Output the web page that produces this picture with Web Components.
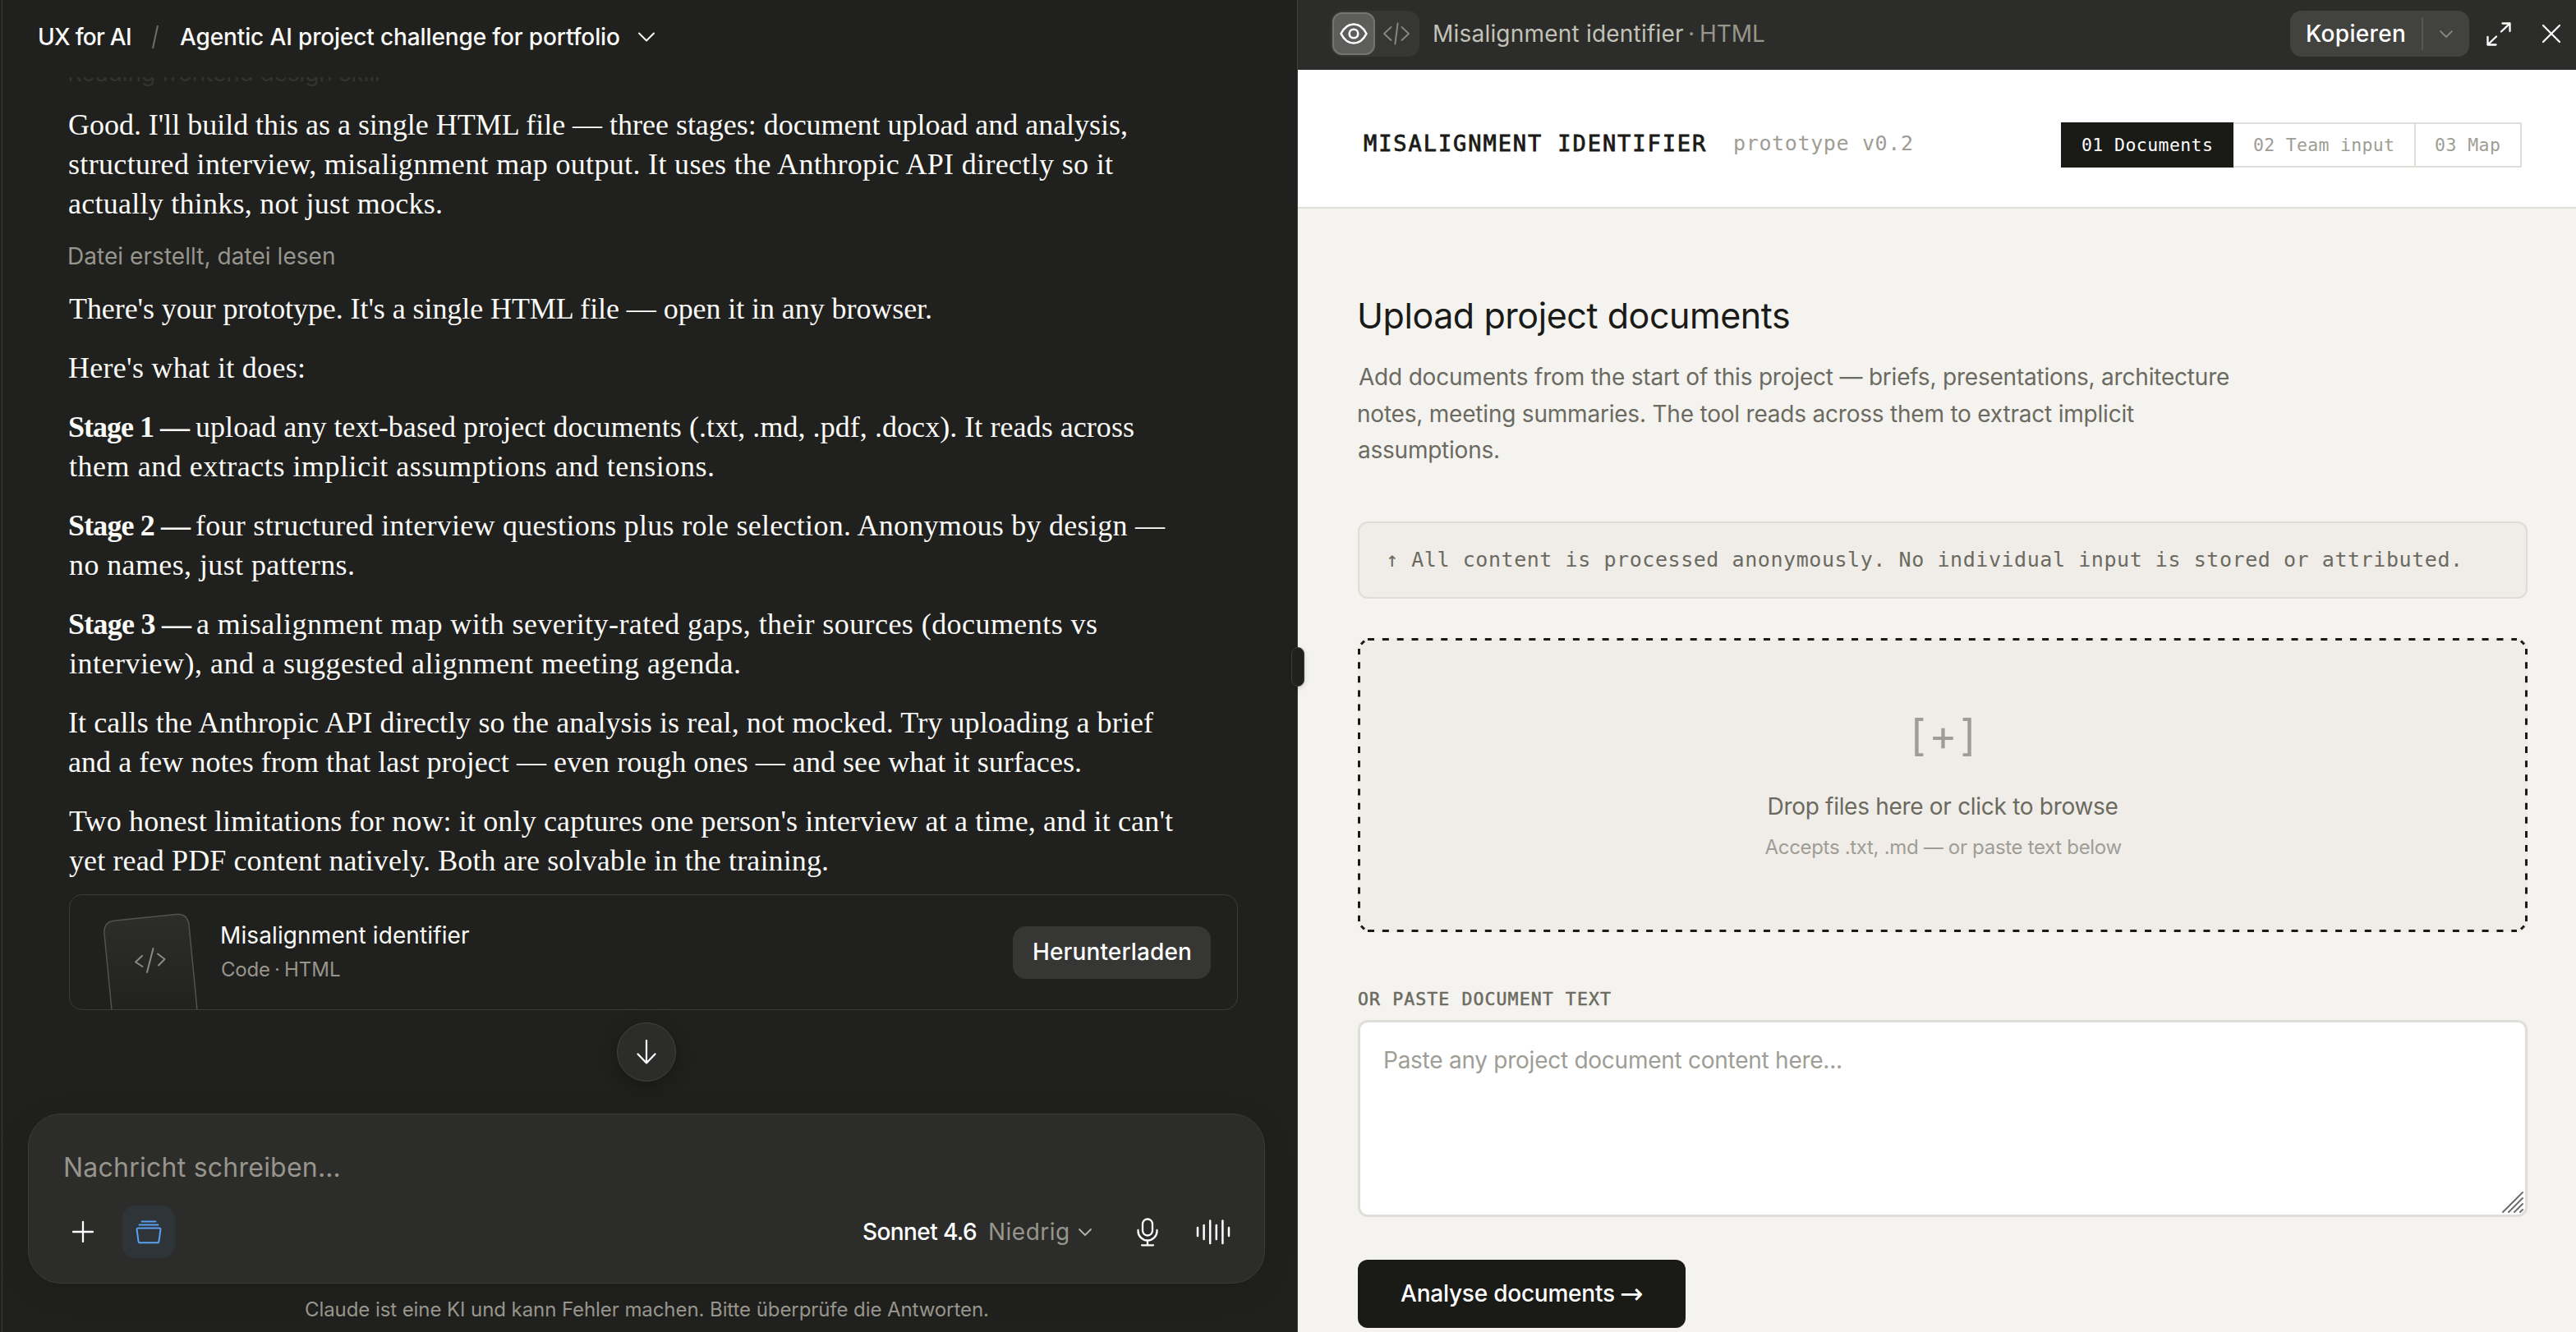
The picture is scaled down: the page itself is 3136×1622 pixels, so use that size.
<!DOCTYPE html>
<html lang="de">
<head>
<meta charset="utf-8">
<title>Misalignment identifier</title>
<style>
html,body{margin:0;height:100%;background:#20201e}
body{font-family:Inter,"Liberation Sans",sans-serif;font-size:28px;overflow:hidden}
</style>
</head>
<body>
<app-shell></app-shell>
<script>
const def=(name,html,after)=>customElements.define(name,class extends HTMLElement{
  constructor(){super();this.attachShadow({mode:'open'}).innerHTML=html}
  connectedCallback(){if(after)after(this)}
});

const ICONS={
  chevron:[20,12,'<path d="M1 1.5 10 10.5 19 1.5"/>'],
  chevronS:[16,9,'<path d="M1 1 8 8 15 1"/>'],
  eye:[34,26,'<path d="M1.5 13C5 6 10.500 1.500 17 1.500S29 6 32.500 13C29 20 23.500 24.500 17 24.500S5 20 1.500 13Z"/><circle cx="17" cy="13" r="5.300"/>'],
  code:[34,28,'<path d="M10.500 6 2 14l8.500 8M18.600 1.500 15.400 26.500M23.500 6 32 14l-8.500 8"/>'],
  expand:[30,29,'<path d="M18 11.500 28.500 1.500M19.500 1.500h9v9.500M12 17.500 1.500 27.500M1.500 18v9.500h10"/>'],
  close:[22,22,'<path d="M1 1 21 21M21 1 1 21"/>'],
  plus:[26,26,'<path d="M13 1v24M1 13h24"/>'],
  down:[24,30,'<path d="M12 1v27.500M1.500 17.500 12 28.500l10.500-11"/>'],
  stack:[32,28,'<path d="M7.500 1.500h17M4.500 5.500h23M3.200 9.500h25.600q1.800 0 1.600 1.800l-1.900 14q-.3 2-2 2H5.500q-1.700 0-2-2l-1.900-14q-.2-1.800 1.600-1.800Z"/>'],
  mic:[26,35,'<rect x="7" y="1.500" width="12" height="20" rx="6"/><path d="M1.500 15v1a11.500 11.500 0 0 0 23 0v-1M13 27.500v6M6 33.300h14"/>'],
  wave:[42,30,'<path d="M2 10v10M9.600 7v17M17.200 1.500v27.500M24.800 7v17M32.400 1.500v27.500M40 10v10"/>'],
  grip:[26,26,'<path d="M1 25 25 1M8 25 25 8M15 25 25 15M22 25 25 22"/>']
};
def('ui-icon','<style>:host{display:block;flex:none;line-height:0}svg{display:block;fill:none;stroke:currentColor;stroke-linecap:round;stroke-linejoin:round;overflow:visible}</style><div></div>',el=>{
  const [w,h,p]=ICONS[el.getAttribute('name')];
  el.shadowRoot.querySelector('div').innerHTML=`<svg width="${w}" height="${h}" viewBox="0 0 ${w} ${h}" stroke-width="${el.getAttribute('sw')||2}">${p}</svg>`;
});

/* artifact card */
def('artifact-card',`<style>
:host{display:flex;box-sizing:border-box;height:141px;border:1.5px solid #3b3b39;border-radius:16px;overflow:hidden;align-items:center;padding:0 32px 0 41px}
.thumb{flex:none;align-self:stretch;width:118px;display:block;margin-left:-1px}
.meta{margin:0 auto 0 27px;display:flex;flex-direction:column}
.t{line-height:40px;color:#fafaf7}
.s{line-height:40px;font-size:24px;color:#97958c;display:flex;gap:9px;margin-top:2px}
.s fit-text+fit-text{margin-left:-2px}
.s fit-text+fit-text+fit-text{margin-left:1px}
.btn{height:64px;width:241px;box-sizing:border-box;padding-left:26px;border-radius:16px;background:#363634;color:#fff;line-height:63px;font-weight:500}
</style>
<svg class="thumb" width="118" height="139" viewBox="125 1090 118 139">
<defs><linearGradient id="g" x1="0" y1="0" x2="0" y2="1"><stop offset="0" stop-color="#2d2d2b"/><stop offset="1" stop-color="#20201e"/></linearGradient></defs>
<path d="M137 1240 127 1137Q126 1122 140 1121L214 1113.500Q228 1112 230 1126L241 1240Z" fill="url(#g)" stroke="#52524f" stroke-width="1.500"/>
<path d="M173 1164 165 1171.500 173.500 1177M186.500 1155 179 1184M192 1161.500 200.500 1168 193 1175.500" fill="none" stroke="#8b8a84" stroke-width="2" stroke-linecap="round" stroke-linejoin="round"/></svg>
<div class="meta"><div class="t"><fit-text w="301">Misalignment identifier</fit-text></div>
<div class="s"><fit-text w="58">Code</fit-text><fit-text w="3">·</fit-text><fit-text w="66">HTML</fit-text></div></div>
<div class="btn"><fit-text w="190">Herunterladen</fit-text></div>`);

def('message-composer',`<style>
:host{display:block;box-sizing:border-box;height:207px;background:#2c2c2a;border:1.5px solid #3b3b39;border-radius:40px;padding:45px 41px 0 34px;box-shadow:0 8px 40px rgba(0,0,0,.12)}
.ph{font-size:32px;line-height:40px;color:#97958c;padding-left:10px}
.row{display:flex;align-items:center;height:64px;margin-top:26px}
.sq{width:64px;height:64px;display:flex;align-items:center;justify-content:center;color:#fff}
.blue{margin-left:16px;border-radius:16px;background:#2f3438;color:#5a9ff0}
.model{margin-left:auto;color:#fff;font-weight:500}
.lvl{color:#97958c;margin:0 13px 0 16px}
</style>
<div class="ph"><fit-text w="334">Nachricht schreiben…</fit-text></div>
<div class="row"><div class="sq"><ui-icon name="plus" sw="2.300"></ui-icon></div>
<div class="sq blue"><ui-icon name="stack" sw="2"></ui-icon></div>
<fit-text class="model" w="138">Sonnet 4.6</fit-text><fit-text class="lvl" w="95">Niedrig</fit-text>
<ui-icon name="chevronS" sw="1.800" style="color:#b5b4ab"></ui-icon>
<ui-icon name="mic" sw="2.300" style="color:#fff;margin-left:55px"></ui-icon>
<ui-icon name="wave" sw="2.500" style="color:#fff;margin-left:46px"></ui-icon></div>`);

/* paragraph of the reply */
def('chat-par',`<style>:host{display:flex;flex-direction:column;align-items:flex-start;margin-bottom:24px;font:36px/48px "Liberation Serif",serif;color:#fafaf7}</style><slot></slot>`);

def('chat-pane',`<style>
:host{display:flex;flex-direction:column;box-sizing:border-box;width:1580px;height:1622px;flex:none;background:#20201e;border-right:1px solid #3e3e3c}
.in{flex:1;margin-left:2px;border-left:1px solid #3b3b39;display:flex;flex-direction:column}
header{display:flex;align-items:center;height:90px;padding:0 0 4px 45px;color:#fafaf7;flex:none;font-weight:500}
header .sl{width:8px;height:28px;margin:0 26px}
header ui-icon{margin-left:23px}
.scroll{overflow:hidden;height:1262px;flex:none;box-sizing:border-box;padding-left:81px;padding-right:72px}
.ghost{margin-top:-25px;height:40px;line-height:40px;color:#333331;margin-bottom:19px}
.st{height:80px;line-height:80px;margin-top:-24px;color:#97958c}
.ln{display:flex}
.ln b{display:block;font-weight:700;margin-right:6px}
artifact-card{margin-top:-7px}
.jump{width:72px;height:72px;box-sizing:border-box;border-radius:50%;border:1.500px solid #42423f;background:#2c2c2a;display:flex;align-items:center;justify-content:center;margin:15px 0 0 667px;color:#fff;box-shadow:0 6px 24px rgba(0,0,0,.3)}
message-composer{margin:0 39px 0 31px}
.foot{font-size:24px;line-height:40px;color:#97958c;margin:12px 0 0 369px}
</style>
<div class="in">
<header><fit-text w="111">UX for AI</fit-text><svg class="sl" viewBox="0 0 8 28"><path d="M7 0 1 28" stroke="#6f6e68" stroke-width="2"/></svg><fit-text w="535">Agentic AI project challenge for portfolio</fit-text><ui-icon name="chevron" sw="2"></ui-icon></header>
<div class="scroll">
<div class="ghost"><fit-text w="377">Reading frontend design skill</fit-text></div>
<chat-par><fit-text w="1287">Good. I'll build this as a single HTML file — three stages: document upload and analysis,</fit-text><fit-text w="1271">structured interview, misalignment map output. It uses the Anthropic API directly so it</fit-text><fit-text w="453">actually thinks, not just mocks.</fit-text></chat-par>
<div class="st"><fit-text w="323">Datei erstellt, datei lesen</fit-text></div>
<chat-par><fit-text w="1049">There's your prototype. It's a single HTML file — open it in any browser.</fit-text></chat-par>
<chat-par><fit-text w="286">Here's what it does:</fit-text></chat-par>
<chat-par><div class="ln"><b><fit-text w="148">Stage 1 —</fit-text></b><fit-text w="1142">upload any text-based project documents (.txt, .md, .pdf, .docx). It reads across</fit-text></div><fit-text w="784">them and extracts implicit assumptions and tensions.</fit-text></chat-par>
<chat-par><div class="ln"><b><fit-text w="149">Stage 2 —</fit-text></b><fit-text w="1180">four structured interview questions plus role selection. Anonymous by design —</fit-text></div><fit-text w="346">no names, just patterns.</fit-text></chat-par>
<chat-par><div class="ln"><b><fit-text w="150">Stage 3 —</fit-text></b><fit-text w="1095">a misalignment map with severity-rated gaps, their sources (documents vs</fit-text></div><fit-text w="816">interview), and a suggested alignment meeting agenda.</fit-text></chat-par>
<chat-par><fit-text w="1320">It calls the Anthropic API directly so the analysis is real, not mocked. Try uploading a brief</fit-text><fit-text w="1231">and a few notes from that last project — even rough ones — and see what it surfaces.</fit-text></chat-par>
<chat-par><fit-text w="1344">Two honest limitations for now: it only captures one person's interview at a time, and it can't</fit-text><fit-text w="923">yet read PDF content natively. Both are solvable in the training.</fit-text></chat-par>
<artifact-card></artifact-card>
<div class="jump"><ui-icon name="down" sw="2.200"></ui-icon></div>
</div>
<message-composer></message-composer>
<div class="foot"><fit-text w="831">Claude ist eine KI und kann Fehler machen. Bitte überprüfe die Antworten.</fit-text></div>
</div>`);

def('artifact-bar',`<style>
:host{display:flex;align-items:center;height:82px;padding:0 19px 3px 40px;background:#2c2c2a;flex:none}
.seg{display:flex;align-items:center;box-sizing:border-box;width:108px;height:56px;border-radius:14px;background:#363634;padding-left:2px}
.on{width:52px;height:52px;box-sizing:border-box;border:2px solid #747472;background:#5d5d5b;border-radius:12px;display:flex;align-items:center;justify-content:center;color:#fff;margin-right:9px}
.name{display:flex;margin:0 auto 0 18px;color:#c3c2b7}
.dot{margin:0 11px 0 8px}
.dim{color:#97958c}
.copy{display:flex;align-items:center;width:218px;height:56px;box-sizing:border-box;border-radius:14px;background:#42423f;padding-left:21px;color:#fff;font-weight:500}
.copy i{width:1.500px;height:40px;background:#565653;margin:0 20px 0 21px}
</style>
<div class="seg"><div class="on"><ui-icon name="eye" sw="2.600"></ui-icon></div><ui-icon name="code" sw="2" style="color:#86857e"></ui-icon></div>
<div class="name"><fit-text w="303">Misalignment identifier</fit-text><fit-text class="dim dot" w="3">·</fit-text><fit-text class="dim" w="77">HTML</fit-text></div>
<div class="copy"><fit-text w="118">Kopieren</fit-text><i></i><ui-icon name="chevronS" sw="1.800" style="color:#86857e"></ui-icon></div>
<ui-icon name="expand" sw="2.300" style="color:#fff;margin-left:21px"></ui-icon>
<ui-icon name="close" sw="2.200" style="color:#fff;margin-left:38px"></ui-icon>`);

def('proto-header',`<style>
:host{display:flex;align-items:center;box-sizing:border-box;height:169px;background:#fff;border-bottom:2px solid #dfded8;padding:16px 66px 0 81px;font-family:"DejaVu Sans Mono",monospace;flex:none}
.t{font-size:27px;color:#1a1a17;margin-top:-5px;-webkit-text-stroke:.8px #1a1a17}
.v{font-size:25px;color:#9e9d96;margin:-4px 0 0 35px}
.steps{display:flex;margin:-1px 0 0 auto;height:55px;font-size:21.5px;color:#9e9d96;line-height:52px}
.s{box-sizing:border-box;border:2px solid #dfded8;border-left:0;height:55px}
.a{background:#1a1a17;border-color:#1a1a17;color:#fff;width:210px;padding-left:26px}
.b{width:222px;padding-left:25px}.c{width:129px;padding-left:24px}
</style>
<fit-text class="t" w="416">MISALIGNMENT IDENTIFIER</fit-text><fit-text class="v" w="215">prototype v0.2</fit-text>
<div class="steps"><div class="s a"><fit-text w="157">01 Documents</fit-text></div><div class="s b"><fit-text w="169">02 Team input</fit-text></div><div class="s c"><fit-text w="78">03 Map</fit-text></div></div>`);

def('drop-zone',`<style>
:host{display:block;position:relative;box-sizing:border-box;height:358px;border-radius:12px;background:#f0ede8}
svg{position:absolute;inset:0}
.c{display:flex;flex-direction:column;align-items:center;padding-top:79px;padding-left:1px}
.p{font-size:52px;line-height:80px;color:#9e9d96}
.m{line-height:40px;color:#6b6a60;margin-top:26px}
.n{font-size:24px;line-height:40px;color:#9e9d96;margin-top:10px}
</style>
<svg width="1424" height="358" fill="none" stroke="#1a1a17" stroke-width="3">
<path d="M12 1.500H1411M12 356.500H1411" stroke-dasharray="8 9.850"/>
<path d="M1.500 13V345M1422.500 13V345" stroke-dasharray="8 9.150" stroke-dashoffset="1"/>
<path d="M4 7.500 8 3.500M1416 3.500l4 4M4 350.500l4 4M1416 354.500l4-4"/></svg>
<div class="c"><fit-text class="p" w="70">[+]</fit-text><fit-text class="m" w="424">Drop files here or click to browse</fit-text><fit-text class="n" w="434">Accepts .txt, .md — or paste text below</fit-text></div>`);

def('paste-area',`<style>
:host{display:flex;justify-content:space-between;box-sizing:border-box;height:240px;border:3px solid #dfded9;border-radius:12px;background:#fff;padding:26px 2px 2px 30px;color:#9e9d96;line-height:40px}
ui-icon{align-self:flex-end;color:#6e6e6e}
</style><div><fit-text w="555">Paste any project document content here...</fit-text></div><ui-icon name="grip" sw="2"></ui-icon>`);

def('artifact-pane',`<style>
:host{display:flex;flex-direction:column;flex:1;height:1622px;background:#f4f3ef;overflow:hidden}
main{padding:101px 59px 0 73px;display:flex;flex-direction:column}
h2{margin:-1px 0 1px;font-size:43px;font-weight:400;line-height:60px;color:#1a1a17;padding-left:2px}
.p{display:flex;flex-direction:column;line-height:44.600px;color:#6b6a60;margin-top:22px;align-items:flex-start;padding-left:1px}
.note{box-sizing:border-box;height:94px;border:2px solid #dfddd8;border-radius:12px;background:#f0ede8;margin:64.200px 0 48px;padding-left:35px;font:25px/89px "DejaVu Sans Mono",monospace;color:#6b6a60}
.lab{font:21.500px/40px "DejaVu Sans Mono",monospace;color:#6b6a60;margin:62px 0 5px;-webkit-text-stroke:.5px #6b6a60;padding-left:1px}
.btn{margin-top:52px;width:399px;height:83px;box-sizing:border-box;border-radius:12px;background:#1a1a17;color:#fff;line-height:82px;padding-left:52px;font-weight:500;display:flex;align-items:center;gap:8px}
.ar{font-family:"DejaVu Sans",sans-serif;font-size:34px;font-weight:400;margin-top:-1px}
</style>
<artifact-bar></artifact-bar><proto-header></proto-header>
<main><h2><fit-text w="523">Upload project documents</fit-text></h2>
<div class="p"><fit-text w="1059">Add documents from the start of this project — briefs, presentations, architecture</fit-text><fit-text w="944">notes, meeting summaries. The tool reads across them to extract implicit</fit-text><fit-text w="170">assumptions.</fit-text></div>
<div class="note"><fit-text w="1303">↑ All content is processed anonymously. No individual input is stored or attributed.</fit-text></div>
<drop-zone></drop-zone>
<div class="lab"><fit-text w="307">OR PASTE DOCUMENT TEXT</fit-text></div>
<paste-area></paste-area>
<div class="btn"><fit-text w="260">Analyse documents</fit-text><fit-text class="ar" w="27">→</fit-text></div>
</main>`);

def('app-shell',`<style>
:host{display:flex;width:3136px;height:1622px;position:relative;overflow:hidden}
.handle{position:absolute;left:1572px;top:788px;width:16px;height:48px;box-sizing:border-box;border:1.500px solid #3e3e3c;border-radius:8px;background:#20201e;box-shadow:0 2px 6px rgba(0,0,0,.15)}
</style><chat-pane></chat-pane><artifact-pane></artifact-pane><div class="handle"></div>`);

/* single line whose tracking is set so that its ink spans the given width */
const ctx=document.createElement('canvas').getContext('2d');
def('fit-text','<style>:host{display:inline-block;white-space:pre;vertical-align:top;flex:none}span{display:inline-block}</style><span><slot></slot></span>',el=>{
  const s=el.shadowRoot.querySelector('span'),w=+el.getAttribute('w'),t=el.textContent,cs=getComputedStyle(el);
  ctx.font=`${cs.fontWeight} ${cs.fontSize} ${cs.fontFamily}`;
  const a=ctx.measureText(t[0]),z=ctx.measureText(t[t.length-1]);
  const l=-a.actualBoundingBoxLeft,r=z.width-z.actualBoundingBoxRight;
  const ink=s.getBoundingClientRect().width-l-r;
  el.style.width=w+'px';
  s.style.marginLeft=-l+'px';
  if(t.length>1)s.style.letterSpacing=(w-ink)/(t.length-1)+'px';
});
</script>
</body>
</html>
